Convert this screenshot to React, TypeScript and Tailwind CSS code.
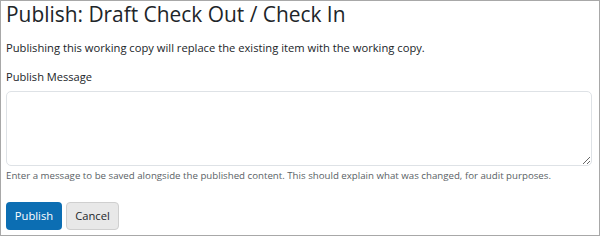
export default function App() {
  return (
    <div className="w-[600px] h-[236px] bg-white border border-[#a8a8a8] px-[5px] font-['Open_Sans',sans-serif] text-[#212529] overflow-hidden">
      <h1 className="text-[20.9px] leading-[26px] font-normal">Publish: Draft Check Out / Check In</h1>
      <p className="text-[11.2px] leading-[16px] mt-[13px]">
        Publishing this working copy will replace the existing item with the working copy.
      </p>
      <label className="block text-[11.1px] leading-[16px] mt-[13px]">Publish Message</label>
      <textarea className="block mt-[6px] w-[586px] h-[75px] border border-[#dee2e6] rounded-[5px] resize-y" />
      <p className="text-[9.7px] leading-[14px] mt-[3px] text-[#5a5f66] whitespace-nowrap">
        Enter a message to be saved alongside the published content. This should explain what was changed, for audit purposes.
      </p>
      <div className="flex gap-[4px] mt-[19px]">
        <button className="h-[28px] w-[56px] rounded-[4px] bg-[#0c6eb3] text-white text-[11.2px]">Publish</button>
        <button className="h-[28px] w-[53px] rounded-[4px] bg-[#e8e8e8] border border-[#cfcfcf] text-[#212529] text-[11.2px]">Cancel</button>
      </div>
    </div>
  );
}
